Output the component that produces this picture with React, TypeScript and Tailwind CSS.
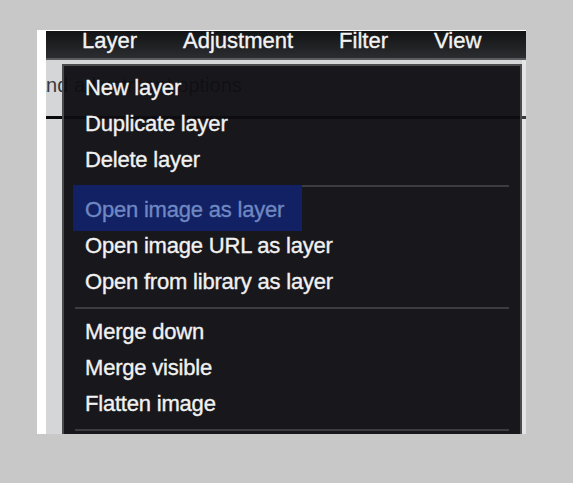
const menuBar = ["Layer", "Adjustment", "Filter", "View"];

type Item = { label: string; active?: boolean };

const groups: Item[][] = [
  [{ label: "New layer" }, { label: "Duplicate layer" }, { label: "Delete layer" }],
  [
    { label: "Open image as layer", active: true },
    { label: "Open image URL as layer" },
    { label: "Open from library as layer" },
  ],
  [{ label: "Merge down" }, { label: "Merge visible" }, { label: "Flatten image" }],
];

function Separator() {
  return <div className="mx-[11px] mt-[7px] mb-[5px] h-[2px] bg-[#3d3d40]" />;
}

function MenuRow({ item }: { item: Item }) {
  return (
    <div className="relative h-[36px] pl-[21px] leading-[36px]">
      {item.active ? (
        <span className="absolute left-[9px] top-[-7px] h-[46px] w-[229px] bg-[#112163]" />
      ) : null}
      <span className={`relative ${item.active ? "text-[#6f87c2]" : "text-[#f1f1f1]"}`}>{item.label}</span>
    </div>
  );
}

export default function App() {
  return (
    <div className="min-h-[483px] bg-[#c8c8c8] pl-[37px] pt-[30px]" style={{ fontFamily: '"Liberation Sans", Arial, sans-serif' }}>
      <div className="relative h-[404px] w-[489px] overflow-hidden bg-white pl-[9px] pt-[1px]">
        <div className="flex h-full flex-col">
          <div className="flex h-[29px] gap-[46px] whitespace-nowrap border-b-2 border-[#5a5b5e] bg-gradient-to-b from-[#121315] to-[#2c2d30] pl-[36px] text-[22px] leading-[20px] text-[#f3f3f3] [-webkit-text-stroke:0.35px_currentColor]">
            {menuBar.map((m) => (
              <span key={m}>{m}</span>
            ))}
            <span className="ml-auto mt-[1px] h-[17px] w-[2px] bg-[#8fb6e2]" />
          </div>
          <div className="flex flex-1">
            <div className="flex-1 overflow-hidden bg-[#d4d6d8]">
              <p className="mt-[13px] -ml-[11px] whitespace-nowrap text-[20px] leading-[24px] text-[#3a3a3a]">and adjustment options</p>
              <div className="mt-[19px] h-[3px] bg-[#0a0a0a]" />
            </div>
            <div className="flex w-[4px] flex-col bg-[#e4e4e4]">
              <div className="h-[56px]" />
              <div className="h-[3px] bg-[#3a3a3a]" />
            </div>
          </div>
        </div>

        <div className="absolute left-[25px] top-[34px] h-[372px] w-[460px] border-2 border-[#4b4b4e] bg-[#0e0e12]/95 pt-[4px] text-[22px] tracking-[-0.2px] [-webkit-text-stroke:0.35px_currentColor]">
          {groups.map((g, gi) => (
            <div key={gi}>
              {g.map((item) => (
                <MenuRow key={item.label} item={item} />
              ))}
              <Separator />
            </div>
          ))}
        </div>
      </div>
    </div>
  );
}
